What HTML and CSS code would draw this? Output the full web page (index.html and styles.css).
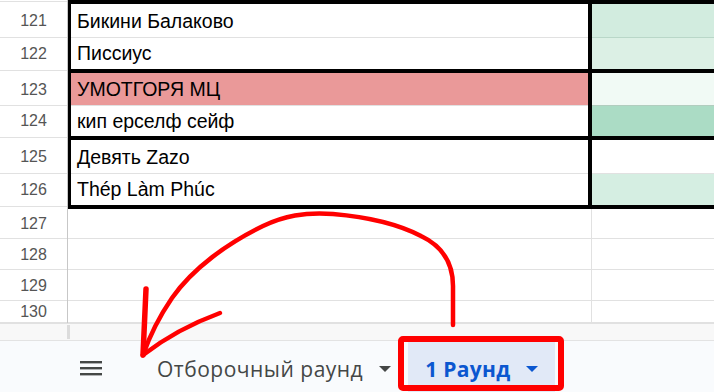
FILE: index.html
```html
<!DOCTYPE html>
<html lang="ru">
<head>
    <meta charset="UTF-8">
    <meta name="viewport" content="width=device-width, initial-scale=1.0">
    <title>Раунды</title>
    <link rel="stylesheet" href="styles.css">
</head>
<body>
    <div class="sheet">
        <div class="grid">
            <div class="num edge"></div><div class="rule"></div>

            <div class="num">121</div><div class="cell a boxed">Бикини Балаково</div><div class="cell b g1"></div>
            <div class="num last">122</div><div class="cell a boxed last">Писсиус</div><div class="cell b g2 last"></div>
            <div class="num edge"></div><div class="rule"></div>

            <div class="num">123</div><div class="cell a boxed red">УМОТГОРЯ МЦ</div><div class="cell b g3"></div>
            <div class="num last">124</div><div class="cell a boxed last">кип ерселф сейф</div><div class="cell b g4 last"></div>
            <div class="num edge"></div><div class="rule"></div>

            <div class="num">125</div><div class="cell a boxed">Девять Zazo</div><div class="cell b"></div>
            <div class="num last">126</div><div class="cell a boxed last">Thép Làm Phúc</div><div class="cell b g5 last"></div>
            <div class="num edge"></div><div class="rule"></div>

            <div class="num">127</div><div class="cell a"></div><div class="cell b"></div>
            <div class="num">128</div><div class="cell a"></div><div class="cell b"></div>
            <div class="num">129</div><div class="cell a"></div><div class="cell b"></div>
            <div class="num">130</div><div class="cell a"></div><div class="cell b"></div>
        </div>
        <div class="hscroll"><span class="split"></span></div>
    </div>

    <div class="tabbar">
        <button class="menu" title="Все листы">
            <svg width="22" height="15" viewBox="0 0 22 15">
                <rect x="0" y="0" width="22" height="2.4" fill="#444746"/>
                <rect x="0" y="6" width="22" height="2.4" fill="#444746"/>
                <rect x="0" y="12" width="22" height="2.4" fill="#444746"/>
            </svg>
        </button>
        <div class="tab">Отборочный раунд <span class="caret"></span></div>
        <div class="tab active">1 Раунд <span class="caret"></span></div>
    </div>

    <!-- hand-drawn markup on top of the sheet -->
    <svg class="marks" width="714" height="392" viewBox="0 0 714 392">
        <rect x="401" y="339" width="160" height="49" rx="2" fill="none" stroke="#ff0000" stroke-width="6"/>
        <path d="M453,325 L453,286 C453,262 442,246 421,236 C398,224 368,217 333,214 C304,212 284,216 263,226 C228,243 193,268 172,298 C159,317 150,335 143,355"
              fill="none" stroke="#ff0000" stroke-width="4.5" stroke-linecap="round" stroke-linejoin="round"/>
        <path d="M143,355 L146,289" fill="none" stroke="#ff0000" stroke-width="5.5" stroke-linecap="round"/>
        <path d="M143,355 C165,338 190,324 220,313" fill="none" stroke="#ff0000" stroke-width="4.5" stroke-linecap="round"/>
    </svg>
</body>
</html>
```

FILE: styles.css
```css
* {
    margin: 0;
    padding: 0;
    box-sizing: border-box;
}

body {
    position: relative;
    width: 714px;
    height: 392px;
    overflow: hidden;
    background: #ffffff;
    font-family: 'Liberation Sans', Arial, sans-serif;
}

.sheet {
    height: 340px;
    display: flex;
    flex-direction: column;
}

.grid {
    display: grid;
    grid-template-columns: 68px 524px 1fr;
    grid-template-rows: 4px 34px 31px 4px 33px 30px 4px 34px 31px 4px 30px 31px 31px 22px;
    height: 323px;
    overflow: hidden;
}

.num {
    display: flex;
    align-items: center;
    justify-content: center;
    font-size: 16px;
    color: #555555;
    border-right: 1px solid #c7c7c7;
    box-shadow: inset 0 -1px 0 #e1e1e1;
}

.num.last {
    box-shadow: none;
}

/* header part of a thick row border: keeps the gridline in its middle */
.num.edge {
    box-shadow: none;
    background: linear-gradient(to bottom, transparent 1px, #e1e1e1 1px, #e1e1e1 2px, transparent 2px);
}

.rule {
    grid-column: 2 / 4;
    background: #000000;
}

.cell {
    display: flex;
    align-items: center;
    padding-left: 6px;
    font-size: 19.5px;
    color: #000000;
    white-space: nowrap;
    box-shadow: inset 0 -1px 0 #e1e1e1;
}

.cell.last {
    box-shadow: none;
}

.a {
    border-right: 1px solid #e1e1e1;
}

.a.boxed {
    padding-left: 6px;
    border-left: 3px solid #000000;
    border-right: 4px solid #000000;
}

.red {
    background: #ea9999;
}

.b.g1 { background: #d2ecdf; box-shadow: inset 0 -1px 0 #b9d7c8; }
.b.g2 { background: #dcf0e5; }
.b.g3 { background: #f1faf5; box-shadow: inset 0 -1px 0 #b2cdbf; }
.b.g4 { background: #abdcc5; }
.b.g5 { background: #d5eee2; }

.hscroll {
    height: 17px;
    background: #f8f8f8;
    border-top: 1px solid #e1e1e1;
    padding-top: 1px;
}

.split {
    display: block;
    width: 3px;
    height: 14px;
    margin-left: 67px;
    background: #dcdcdc;
}

.tabbar {
    display: flex;
    align-items: stretch;
    height: 52px;
    padding-left: 69px;
    background: #f9fbfd;
    border-top: 1px solid #e3e3e3;
}

.menu {
    width: 44px;
    border: none;
    background: none;
    display: flex;
    align-items: center;
    justify-content: center;
    padding-top: 3px;
}

.tab {
    display: flex;
    align-items: center;
    gap: 16px;
    padding: 4px 17px 0;
    font-family: 'Open Sans', sans-serif;
    font-size: 21px;
    letter-spacing: 0.5px;
    color: #444746;
}

.tab:first-of-type {
    margin-left: 27px;
}

.tab.active {
    background: #e1e9f7;
    color: #0b57d0;
    font-weight: 700;
    letter-spacing: 0.3px;
}

.caret {
    width: 0;
    height: 0;
    border-left: 6px solid transparent;
    border-right: 6px solid transparent;
    border-top: 6px solid currentColor;
}

.marks {
    position: absolute;
    left: 0;
    top: 0;
    pointer-events: none;
}
```
